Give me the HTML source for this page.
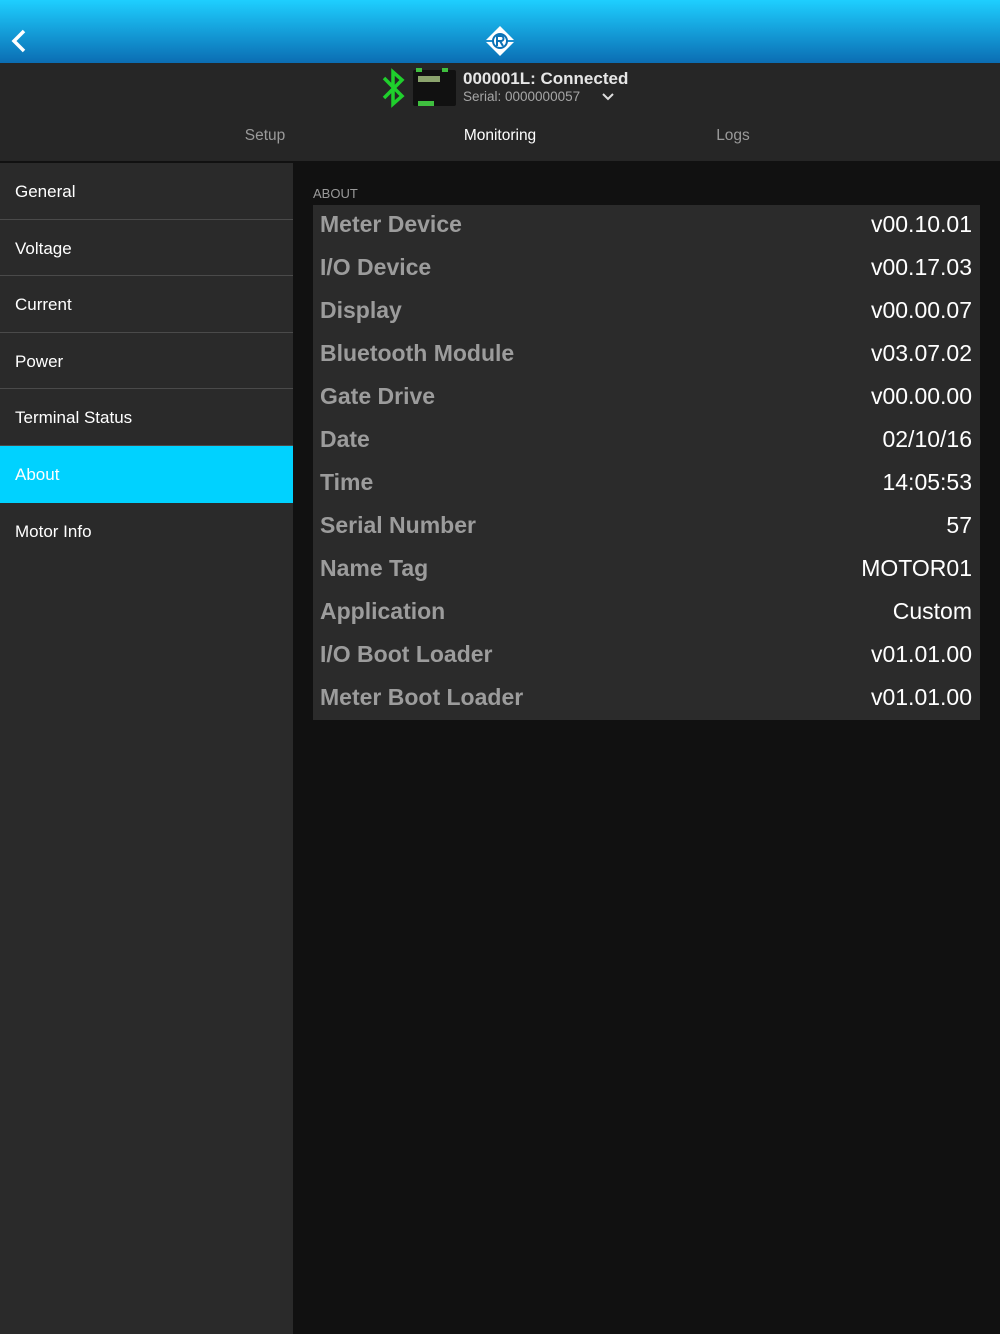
<!DOCTYPE html>
<html><head><meta charset="utf-8"><style>
*{margin:0;padding:0;box-sizing:border-box}
body{width:1000px;height:1334px;background:#111;font-family:"Liberation Sans",sans-serif;position:relative;overflow:hidden}
.hdr{position:absolute;left:0;top:0;width:1000px;height:63px;background:linear-gradient(#1ecfff,#0b6db3)}
.bar{position:absolute;left:0;top:63px;width:1000px;height:98px;background:#262626}
.side{position:absolute;left:0;top:163px;width:293px;height:1171px;background:#2a2a2a}
.item{height:56.6px;border-bottom:1px solid #4a4a4a;color:#fff;font-size:17px;line-height:57px;padding-left:15px}
.item.act{background:#00d2ff;border-bottom-color:#00d2ff}
.tab{position:absolute;top:127px;font-size:15.5px;color:#9a9a9a;transform:translateX(-50%)}
.tbl{position:absolute;left:313px;top:205px;width:667px;height:515px;background:#2b2b2b}
.row{height:43px;display:flex;justify-content:space-between;align-items:center;padding:0 8px 0 7px;font-size:23px;position:relative;top:-2px}
.row b{color:#9c9c9c}
.row span{color:#fff}
</style></head><body>
<div class="hdr">
<svg style="position:absolute;left:10px;top:29px" width="18" height="24" viewBox="0 0 18 24"><path d="M14 2 L4 12 L14 22" stroke="#fff" stroke-width="3.5" fill="none"/></svg>
<svg style="position:absolute;left:484px;top:25px" width="32" height="32" viewBox="0 0 32 32"><path d="M16 1 L31 16 L16 31 L1 16Z" fill="#fff"/><rect x="1" y="15" width="30" height="2" fill="#1a8fd0"/><circle cx="16" cy="16" r="7" fill="#fff" stroke="#0c72b6" stroke-width="2"/><path d="M13 11 v10 M13 11 h4 a2.5 2.5 0 0 1 0 5 h-4 M16 16 l3 5" stroke="#0c72b6" stroke-width="2" fill="none"/></svg>
</div>
<div class="bar">
<svg style="position:absolute;left:380px;top:5px" width="28" height="40" viewBox="0 0 28 40"><path d="M4 10 L22 28 L13 36 V4 L22 12 L4 30" stroke="#1fcf2c" stroke-width="3.5" fill="none"/></svg>
<div style="position:absolute;left:413px;top:7px;width:43px;height:36px;background:#111;border-radius:2px"></div>
<div style="position:absolute;left:418px;top:13px;width:22px;height:6px;background:#8ba36d"></div>
<div style="position:absolute;left:416px;top:5px;width:6px;height:4px;background:#3fbf3f"></div>
<div style="position:absolute;left:442px;top:5px;width:6px;height:4px;background:#3fbf3f"></div>
<div style="position:absolute;left:418px;top:38px;width:16px;height:5px;background:#3fbf3f"></div>
<div style="position:absolute;left:463px;top:6px;color:#e6e6e6;font-size:17px;font-weight:bold">000001L: Connected</div>
<div style="position:absolute;left:463px;top:26px;color:#a6a6a6;font-size:13.5px">Serial: 0000000057</div>
<svg style="position:absolute;left:602px;top:30px" width="12" height="9" viewBox="0 0 12 9"><path d="M1 1 L6 6 L11 1" stroke="#ddd" stroke-width="2" fill="none"/></svg>
</div>
<div class="tab" style="left:265px">Setup</div>
<div class="tab" style="left:500px;color:#fff">Monitoring</div>
<div class="tab" style="left:733px">Logs</div>
<div class="side">
<div class="item">General</div><div class="item">Voltage</div><div class="item">Current</div><div class="item">Power</div><div class="item">Terminal Status</div><div class="item act">About</div><div class="item" style="border:none">Motor Info</div>
</div>
<div style="position:absolute;left:313px;top:186px;color:#9a9a9a;font-size:13px">ABOUT</div>
<div class="tbl">
<div class="row"><b>Meter Device</b><span>v00.10.01</span></div>
<div class="row"><b>I/O Device</b><span>v00.17.03</span></div>
<div class="row"><b>Display</b><span>v00.00.07</span></div>
<div class="row"><b>Bluetooth Module</b><span>v03.07.02</span></div>
<div class="row"><b>Gate Drive</b><span>v00.00.00</span></div>
<div class="row"><b>Date</b><span>02/10/16</span></div>
<div class="row"><b>Time</b><span>14:05:53</span></div>
<div class="row"><b>Serial Number</b><span>57</span></div>
<div class="row"><b>Name Tag</b><span>MOTOR01</span></div>
<div class="row"><b>Application</b><span>Custom</span></div>
<div class="row"><b>I/O Boot Loader</b><span>v01.01.00</span></div>
<div class="row"><b>Meter Boot Loader</b><span>v01.01.00</span></div>
</div>
</body></html>
